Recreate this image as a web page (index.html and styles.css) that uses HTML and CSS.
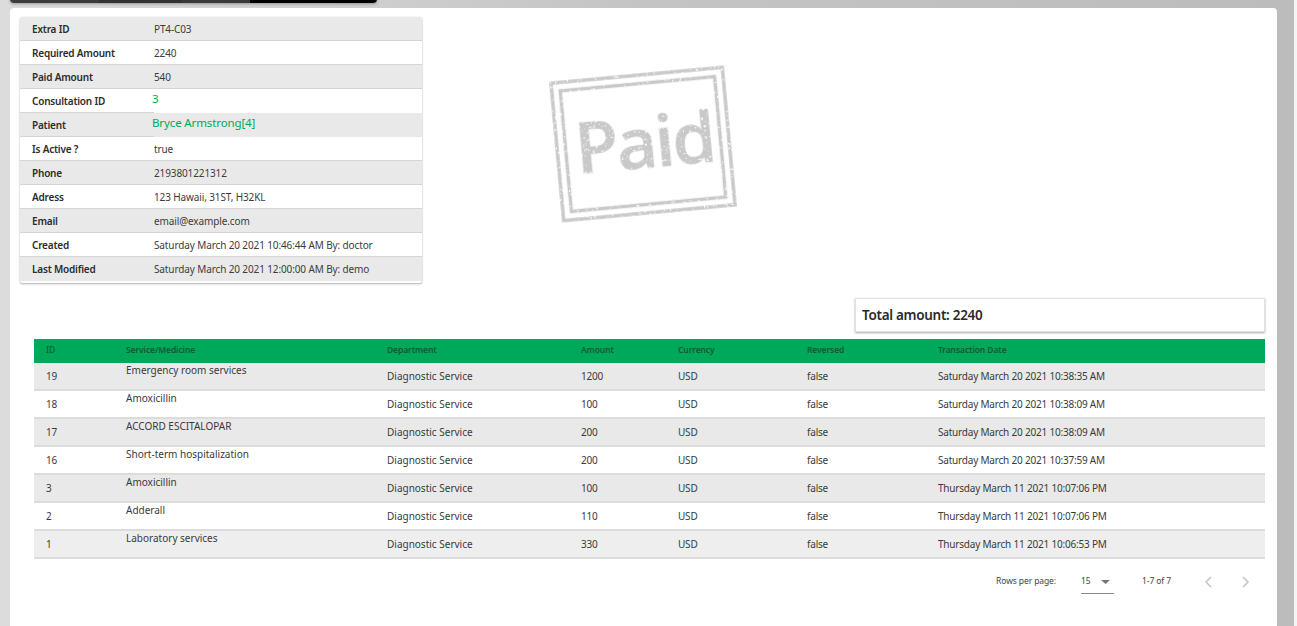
FILE: index.html
```html
<!DOCTYPE html>
<html lang="en">
<head>
<meta charset="utf-8">
<title>Invoice</title>
<link rel="stylesheet" href="styles.css">
</head>
<body>
<div class="topbar"></div>
<main class="sheet">
  <section class="top">
    <div class="info">
      <div class="irow"><span class="k">Extra ID</span><span class="v">PT4-C03</span></div>
      <div class="irow"><span class="k">Required Amount</span><span class="v">2240</span></div>
      <div class="irow"><span class="k">Paid Amount</span><span class="v">540</span></div>
      <div class="irow link"><span class="k">Consultation ID</span><span class="v">3</span></div>
      <div class="irow link"><span class="k">Patient</span><span class="v">Bryce Armstrong[4]</span></div>
      <div class="irow"><span class="k">Is Active ?</span><span class="v">true</span></div>
      <div class="irow"><span class="k">Phone</span><span class="v">2193801221312</span></div>
      <div class="irow"><span class="k">Adress</span><span class="v">123 Hawaii, 31ST, H32KL</span></div>
      <div class="irow"><span class="k">Email</span><span class="v">email@example.com</span></div>
      <div class="irow"><span class="k">Created</span><span class="v">Saturday March 20 2021 10:46:44 AM By: doctor</span></div>
      <div class="irow"><span class="k">Last Modified</span><span class="v">Saturday March 20 2021 12:00:00 AM By: demo</span></div>
    </div>
    <div class="stampwrap">
      <svg class="stamp" viewBox="0 0 190 160" width="190" height="160" aria-hidden="true">
        <defs>
          <filter id="rough" x="-5%" y="-5%" width="110%" height="110%">
            <feTurbulence type="fractalNoise" baseFrequency="0.4" numOctaves="2" seed="4" result="n"/>
            <feColorMatrix in="n" type="matrix" values="0 0 0 0 1  0 0 0 0 1  0 0 0 0 1  0 0 0 -9 3.3" result="spots"/>
            <feComposite in="SourceGraphic" in2="spots" operator="out"/>
          </filter>
        </defs>
        <g filter="url(#rough)" transform="rotate(-5.3 95 80)" fill="none" stroke="#c9c9c9">
          <rect x="9" y="11" width="172" height="138" stroke-width="3.5"/>
          <rect x="17.5" y="19.5" width="155" height="121" stroke-width="3.5"/>
          <text class="stamptext" x="96.5" y="104" text-anchor="middle">Paid</text>
        </g>
      </svg>
    </div>
  </section>
  <div class="totalrow"><div class="total">Total amount: 2240</div></div>
  <table class="tx">
    <thead>
      <tr><th>ID</th><th>Service/Medicine</th><th>Department</th><th>Amount</th><th>Currency</th><th>Reversed</th><th>Transaction Date</th></tr>
    </thead>
    <tbody>
      <tr><td>19</td><td><span class="up">Emergency room services</span></td><td>Diagnostic Service</td><td>1200</td><td>USD</td><td>false</td><td>Saturday March 20 2021 10:38:35 AM</td></tr>
      <tr><td>18</td><td><span class="up">Amoxicillin</span></td><td>Diagnostic Service</td><td>100</td><td>USD</td><td>false</td><td>Saturday March 20 2021 10:38:09 AM</td></tr>
      <tr><td>17</td><td><span class="up">ACCORD ESCITALOPAR</span></td><td>Diagnostic Service</td><td>200</td><td>USD</td><td>false</td><td>Saturday March 20 2021 10:38:09 AM</td></tr>
      <tr><td>16</td><td><span class="up">Short-term hospitalization</span></td><td>Diagnostic Service</td><td>200</td><td>USD</td><td>false</td><td>Saturday March 20 2021 10:37:59 AM</td></tr>
      <tr><td>3</td><td><span class="up">Amoxicillin</span></td><td>Diagnostic Service</td><td>100</td><td>USD</td><td>false</td><td>Thursday March 11 2021 10:07:06 PM</td></tr>
      <tr><td>2</td><td><span class="up">Adderall</span></td><td>Diagnostic Service</td><td>110</td><td>USD</td><td>false</td><td>Thursday March 11 2021 10:07:06 PM</td></tr>
      <tr class="last"><td>1</td><td><span class="up">Laboratory services</span></td><td>Diagnostic Service</td><td>330</td><td>USD</td><td>false</td><td>Thursday March 11 2021 10:06:53 PM</td></tr>
    </tbody>
  </table>
  <div class="pager">
    <span class="rpp">Rows per page:</span>
    <span class="select"><span>15</span><svg class="caret" width="9" height="4" viewBox="0 0 9 4" aria-hidden="true"><path d="M0 0h9L4.5 4z" fill="#757575"/></svg></span>
    <span class="range">1-7 of 7</span>
    <svg class="chev" width="24" height="24" viewBox="0 0 24 24" aria-hidden="true"><path d="M15 7l-5 5 5 5" fill="none" stroke="#c4c4c4" stroke-width="1.5"/></svg>
    <svg class="chev" width="24" height="24" viewBox="0 0 24 24" aria-hidden="true"><path d="M10 7l5 5-5 5" fill="none" stroke="#c4c4c4" stroke-width="1.5"/></svg>
  </div>
</main>
</body>
</html>
```
FILE: styles.css
```css
* { box-sizing: border-box; }
html, body { margin: 0; height: 100%; overflow: hidden; }
body {
  background: linear-gradient(90deg, #dcdcdc 0, #c4c4c4 50%, #bcbcbc 99.8%, #f5f5f5 99.8%);
  font-family: "Noto Sans", "Open Sans", sans-serif;
  color: #333;
  font-size: 10px;
  letter-spacing: -0.2px;
  position: relative;
}
.topbar {
  position: absolute;
  left: 10px; top: -10px;
  width: 367px; height: 13px;
  border-radius: 4px;
  background: linear-gradient(90deg, #3c3c3c 0, #3c3c3c 24%, #333 24%, #333 47%, #3a3a3a 47%, #3a3a3a 65.4%, #000 65.4%);
  box-shadow: 0 1px 3px rgba(0,0,0,.3);
}
.sheet {
  margin: 8px 20px 0 10px;
  height: 640px;
  background: #fff;
  border-radius: 4px;
  padding: 9px 12px 0 10px;
}
.top { display: flex; height: 266px; }
.info {
  width: 402px;
  height: 266px;
  border-radius: 2px;
  box-shadow: 0 1px 2px rgba(0,0,0,.3), 0 0 1px rgba(0,0,0,.2);
  overflow: hidden;
}
.irow {
  height: 24px;
  display: flex;
  align-items: center;
  border-bottom: 1px solid #d5d5d5;
}
.irow:nth-child(odd) { background: #e9e9e9; }
.irow:last-child { border-bottom: 0; }
.k { width: 134px; padding-left: 12px; font-weight: 600; color: #2b2b2b; font-size: 10px; flex: none; }
.v { color: #3c3c3c; font-size: 10px; letter-spacing: -0.12px; }
.irow.link { border-bottom: 0; }
.irow.link .k { align-self: stretch; display: flex; align-items: center; border-bottom: 1px solid #d5d5d5; }
.irow.link .v { color: #00a859; font-size: 11.5px; letter-spacing: -0.12px; margin: -6px 0 0 -2px; }
.stampwrap { flex: 1; padding: 47px 0 0 126px; }
.stamp { display: block; }
.stamptext { font-family: "Open Sans", sans-serif; font-size: 71px; font-weight: 600; fill: #c9c9c9; stroke: #c9c9c9; stroke-width: 0.5px; letter-spacing: -2.5px; }
.totalrow { display: flex; justify-content: flex-end; margin-top: 15px; }
.total {
  width: 410px; height: 34px;
  padding-left: 6px;
  display: flex; align-items: center;
  font-size: 13.5px; font-weight: 600; color: #2a2a2a;
  letter-spacing: -0.3px;
  border: 1px solid #e2e2e2;
  box-shadow: 0 1px 2px rgba(0,0,0,.35);
}
.tx {
  margin: 7px 0 0 14px;
  width: 1231px;
  border-collapse: separate;
  border-spacing: 0;
  table-layout: fixed;
}
.tx th:nth-child(1) { width: 80px; }
.tx th:nth-child(2) { width: 261px; }
.tx th:nth-child(3) { width: 194px; }
.tx th:nth-child(4) { width: 97px; }
.tx th:nth-child(5) { width: 129px; }
.tx th:nth-child(6) { width: 131px; }
.tx thead tr { background: #00a859; }
.tx th { height: 24px; text-align: left; font-size: 8.5px; font-weight: 600; color: #0c5c36; padding: 0 0 4px 12px; letter-spacing: -0.1px; }
.tx th:first-child { font-weight: 500; }
.tx td { padding: 0 0 1px 12px; height: 28px; font-size: 10px; color: #3a3a3a; border-bottom: 2px solid #dcdcdc; }
.tx td:nth-child(2), .tx td:nth-child(3) { letter-spacing: 0; }
.tx tbody tr:nth-child(odd) { background: #e9e9e9; }
.tx tbody tr.last { background: #eeeeee; }
.up { display: block; margin-top: -12px; }
.pager {
  margin-top: 7px;
  display: flex;
  align-items: center;
  justify-content: flex-end;
  height: 28px;
  padding-right: 8px;
  color: #444;
  font-size: 8.5px;
  letter-spacing: -0.1px;
}
.select {
  margin-left: 25px;
  width: 33px; height: 28px;
  display: flex; align-items: center; justify-content: space-between;
  padding: 1px 4px 0 0;
  border-bottom: 1px solid #8a8a8a;
}
.caret { margin-top: 3px; }
.range { margin: 0 25px 0 28px; }
.chev { margin-top: 3px; }
.chev + .chev { margin-left: 13px; }
```
